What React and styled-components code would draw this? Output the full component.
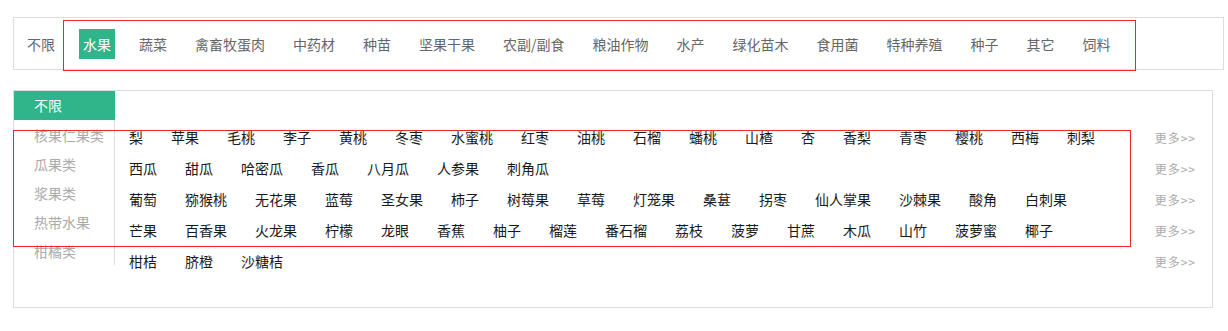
import React, { useState } from "react"
import styled, { createGlobalStyle } from "styled-components"

const GlobalStyle = createGlobalStyle`
  body {
    margin: 0;
    background: #fff;
    font-family: "Noto Sans CJK SC", "Noto Sans", sans-serif;
  }
`

const Page = styled.div`
  position: relative;
  padding: 17px 0 0 13px;
  width: 1215px;
`

const TopBar = styled.div`
  display: flex;
  align-items: center;
  width: 1200px;
  height: 51px;
  border: solid 1px #ddd;
  padding-left: 9px;
  box-sizing: content-box;
`

const TopItem = styled.span`
  display: inline-block;
  padding: 0 4px;
  margin-right: 20px;
  height: 30px;
  line-height: 30px;
  font-size: 14px;
  color: ${(p) => (p.active ? "#fff" : "#666")};
  background: ${(p) => (p.active ? "#30b58b" : "transparent")};
  white-space: nowrap;
  cursor: pointer;
`

const Panel = styled.div`
  display: flex;
  margin-top: 20px;
  width: 1198px;
  border: solid 1px #ddd;
`

const Side = styled.div`
  width: 101px;
  flex-shrink: 0;
`

const SideHeader = styled.div`
  height: 29px;
  line-height: 29px;
  padding-left: 20px;
  font-size: 14px;
  color: #fff;
  background: #30b58b;
`

const SideList = styled.div`
  width: 100px;
  border-right: solid 1px #ddd;
`

const SideItem = styled.div`
  height: 29px;
  line-height: 30px;
  padding-left: 20px;
  font-size: 14px;
  color: #aaa;
  white-space: nowrap;
`

const Content = styled.div`
  flex: 1;
  padding: 31px 16px 30px 14px;
`

const Row = styled.div`
  display: flex;
  align-items: center;
  height: 31px;
`

const Items = styled.div`
  display: flex;
`

const Item = styled.span`
  margin-right: 28px;
  font-size: 14px;
  line-height: 31px;
  color: #1a1a1a;
  white-space: nowrap;
`

const More = styled.span`
  margin-left: auto;
  font-size: 12px;
  letter-spacing: 1px;
  color: #aaa;
  white-space: nowrap;
  cursor: pointer;
`

const Mark = styled.div`
  position: absolute;
  border: solid 1px #e8282b;
  pointer-events: none;
`

const categories = [
  "蔬菜", "禽畜牧蛋肉", "中药材", "种苗", "坚果干果", "农副/副食", "粮油作物",
  "水产", "绿化苗木", "食用菌", "特种养殖", "种子", "其它", "饲料",
]

const groups = ["核果仁果类", "瓜果类", "浆果类", "热带水果", "柑橘类"]

const rows = [
  ["梨", "苹果", "毛桃", "李子", "黄桃", "冬枣", "水蜜桃", "红枣", "油桃", "石榴", "蟠桃", "山楂", "杏", "香梨", "青枣", "樱桃", "西梅", "刺梨"],
  ["西瓜", "甜瓜", "哈密瓜", "香瓜", "八月瓜", "人参果", "刺角瓜"],
  ["葡萄", "猕猴桃", "无花果", "蓝莓", "圣女果", "柿子", "树莓果", "草莓", "灯笼果", "桑葚", "拐枣", "仙人掌果", "沙棘果", "酸角", "白刺果"],
  ["芒果", "百香果", "火龙果", "柠檬", "龙眼", "香蕉", "柚子", "榴莲", "番石榴", "荔枝", "菠萝", "甘蔗", "木瓜", "山竹", "菠萝蜜", "椰子"],
  ["柑桔", "脐橙", "沙糖桔"],
]

const App = () => {
  const [active, setActive] = useState("水果")

  return (
    <Page>
      <GlobalStyle />
      <TopBar>
        <TopItem>不限</TopItem>
        {["水果", ...categories].map((c) => (
          <TopItem key={c} active={c === active} onClick={() => setActive(c)}>
            {c}
          </TopItem>
        ))}
      </TopBar>

      <Panel>
        <Side>
          <SideHeader>不限</SideHeader>
          <SideList>
            {groups.map((g) => (
              <SideItem key={g}>{g}</SideItem>
            ))}
          </SideList>
        </Side>
        <Content>
          {rows.map((r, i) => (
            <Row key={i}>
              <Items>
                {r.map((name) => (
                  <Item key={name}>{name}</Item>
                ))}
              </Items>
              <More>更多&gt;&gt;</More>
            </Row>
          ))}
        </Content>
      </Panel>

      {/* red highlight frames drawn over the page */}
      <Mark style={{ left: 63, top: 20, width: 1071, height: 49 }} />
      <Mark style={{ left: 13, top: 130, width: 1116, height: 115 }} />
    </Page>
  )
}

export default App
